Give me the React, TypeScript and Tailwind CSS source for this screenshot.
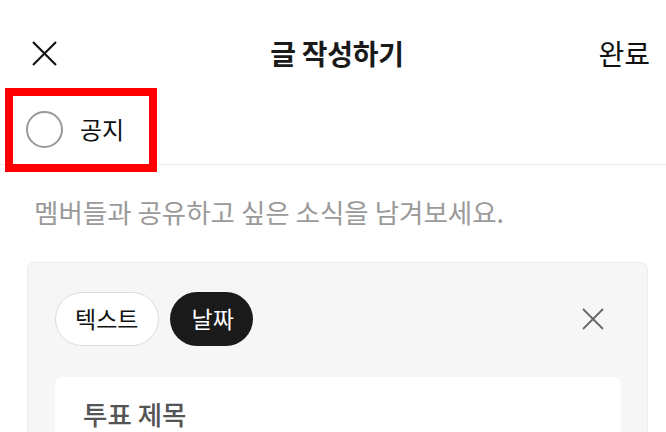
import React from "react";

const XIcon = ({ size, stroke, color }: { size: number; stroke: number; color: string }) => (
  <svg width={size} height={size} viewBox={`0 0 ${size} ${size}`} fill="none">
    <line x1={1} y1={1} x2={size - 1} y2={size - 1} stroke={color} strokeWidth={stroke} />
    <line x1={size - 1} y1={1} x2={1} y2={size - 1} stroke={color} strokeWidth={stroke} />
  </svg>
);

export default function App() {
  return (
    <div className="relative w-[666px] h-[432px] overflow-hidden bg-white font-['Noto_Sans_CJK_KR','Noto_Sans',sans-serif] text-[#111]">
      {/* header */}
      <div className="grid h-[94px] grid-cols-[1fr_auto_1fr] items-center pt-[12px] pl-[32px] pr-[16px]">
        <div className="justify-self-start">
          <XIcon size={25} stroke={2.2} color="#111" />
        </div>
        <div className="mr-[8px] text-[28px] font-bold leading-none tracking-[-0.3px] text-[#1a1a1a]">글 작성하기</div>
        <div className="justify-self-end text-[28px] leading-none text-[#111]">완료</div>
      </div>

      {/* notice row */}
      <div className="flex h-[71px] items-center gap-[17px] border-b border-[#ebebeb] pl-[26px]">
        <div className="h-[37px] w-[37px] rounded-full border-[2.5px] border-[#999]" />
        <div className="text-[24px] leading-none">공지</div>
      </div>

      {/* placeholder */}
      <div className="pl-[34px] pt-[34px] text-[26.5px] leading-none text-[#9a9a9a]">
        멤버들과 공유하고 싶은 소식을 남겨보세요.
      </div>

      {/* card */}
      <div className="ml-[27px] mt-[36px] w-[621px] rounded-[7px] border border-[#ececec] bg-[#f6f6f6] pl-[27px] pr-[26px] pt-[29px] pb-[40px]">
        <div className="flex items-center">
          <div className="flex h-[54px] items-center rounded-full border-[1.5px] border-[#dcdcdc] bg-white pl-[19px] pr-[20px] text-[23px] leading-none text-[#111]">
            텍스트
          </div>
          <div className="ml-[11px] flex h-[54px] items-center rounded-full bg-[#1a1a1a] pl-[21px] pr-[19px] text-[23px] leading-none text-white">
            날짜
          </div>
          <div className="ml-auto mr-[17px]">
            <XIcon size={22} stroke={1.8} color="#666" />
          </div>
        </div>
        <div className="mt-[31px] h-[120px] rounded-[7px] bg-white pl-[28px] pt-[24px]">
          <div className="text-[26.5px] font-medium leading-none text-[#555]">투표 제목</div>
        </div>
      </div>

      {/* red annotation box */}
      <div className="pointer-events-none absolute left-[5px] top-[88px] h-[84px] w-[152px] border-[8px] border-[#ff0000]" />
    </div>
  );
}
